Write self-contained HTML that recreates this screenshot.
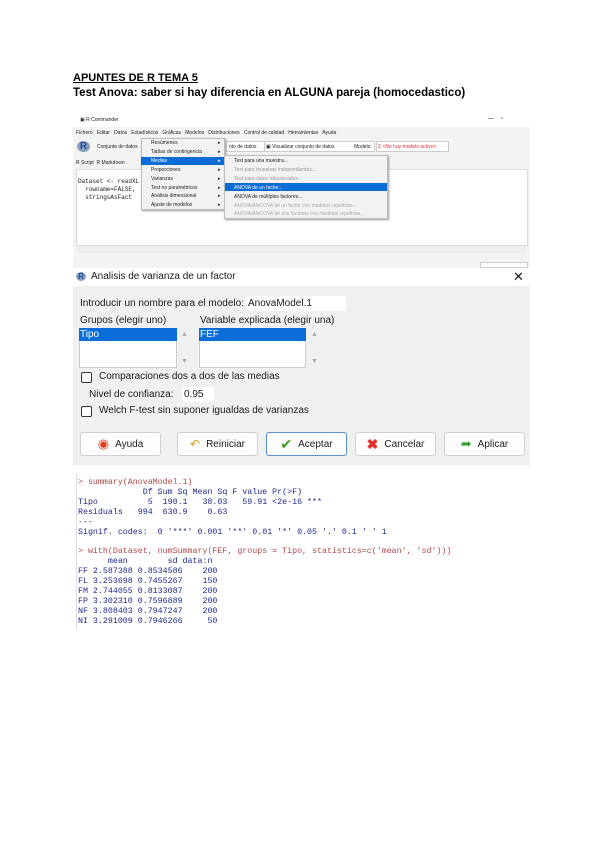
<!DOCTYPE html>
<html><head><meta charset="utf-8"><style>
*{margin:0;padding:0;box-sizing:border-box}
body{width:600px;height:848px;background:#fff;position:relative;font-family:"Liberation Sans",sans-serif;overflow:hidden}
.a{position:absolute}
.s{font-size:5px;color:#222;white-space:nowrap}
.m{font-family:"Liberation Mono",monospace;font-size:8.3px;white-space:pre;line-height:9.9px}
.btn{position:absolute;top:432px;height:24px;width:81px;background:#fdfdfd;border:1px solid #d0d0d0;border-radius:3px;font-size:10px;color:#222;display:flex;align-items:center;justify-content:center;gap:6px}
.lbl{position:absolute;font-size:10px;color:#1a1a1a;white-space:nowrap}
.cb{position:absolute;width:11px;height:11px;border:1px solid #333;border-radius:2px;background:#fff}
</style></head><body>
<div class="a" style="left:73px;top:72px;font-size:11px;font-weight:bold;text-decoration:underline">APUNTES DE R TEMA 5</div>
<div class="a" style="left:73px;top:87px;font-size:11.5px;font-weight:bold">Test Anova: saber si hay diferencia en ALGUNA pareja (homocedastico)</div>

<!-- screenshot 1 -->
<div class="a" style="left:73px;top:115px;width:457px;height:153px;background:#f3f3f3"></div>
<div class="a" style="left:73px;top:115px;width:457px;height:12px;background:#fff"></div>
<div class="a s" style="left:80px;top:117px">▣ R Commander</div>
<div class="a s" style="left:488px;top:116px;font-size:6px">—&nbsp;&nbsp;&nbsp;&nbsp;▫&nbsp;&nbsp;&nbsp;&nbsp;&nbsp;</div>
<div class="a s" style="left:76px;top:130px">Fichero&nbsp;&nbsp; Editar&nbsp;&nbsp; Datos&nbsp;&nbsp; Estadísticos&nbsp;&nbsp; Gráficas&nbsp;&nbsp; Modelos&nbsp;&nbsp; Distribuciones&nbsp;&nbsp; Control de calidad&nbsp;&nbsp; Herramientas&nbsp;&nbsp; Ayuda</div>
<div class="a" style="left:77px;top:141px;width:13px;height:11px;border-radius:50%;background:#8aa0c0;color:#1d4f9a;font-weight:bold;font-size:10px;line-height:11px;text-align:center">R</div>
<div class="a s" style="left:97px;top:144px">Conjunto de datos</div>
<div class="a" style="left:226px;top:141px;width:43px;height:11px;background:#fff;border:1px solid #ccc"></div>
<div class="a s" style="left:229px;top:144px">nto de datos</div>
<div class="a" style="left:264px;top:141px;width:111px;height:11px;background:#fff;border:1px solid #ccc"></div>
<div class="a s" style="left:266px;top:144px">▣ Visualizar conjunto de datos</div>
<div class="a s" style="left:354px;top:144px">Modelo:</div>
<div class="a" style="left:376px;top:141px;width:73px;height:11px;background:#fff;border:1px solid #ccc"></div>
<div class="a s" style="left:378px;top:144px;color:#e03030">Σ &lt;No hay modelo activo&gt;</div>
<div class="a s" style="left:76px;top:160px">R Script&nbsp; R Markdown</div>
<div class="a" style="left:76px;top:169px;width:452px;height:77px;background:#fff;border:1px solid #ddd"></div>
<div class="a m" style="left:78px;top:178px;font-size:6px;line-height:8px;color:#222">Dataset &lt;- readXL
  rowname=FALSE,
  stringsAsFact</div>
<div class="a" style="left:77px;top:246px;width:450px;height:7px;background:#eee"></div>
<div class="a" style="left:480px;top:262px;width:48px;height:6px;background:#fff;border:1px solid #ccc"></div>
<!-- menu -->
<div class="a" style="left:141px;top:138px;width:84px;height:72px;background:#f2f2f2;border:1px solid #bbb;box-shadow:1px 1px 2px #999"></div>
<div class="a" style="left:141px;top:157px;width:84px;height:8px;background:#0a6cd6"></div>
<div class="a s" style="left:151px;top:139px;line-height:8.9px">Resúmenes<br>Tablas de contingencia<br><span style="color:#fff">Medias</span><br>Proporciones<br>Varianzas<br>Test no paramétricos<br>Análisis dimensional<br>Ajuste de modelos</div>
<div class="a s" style="left:218px;top:139px;line-height:8.9px">▸<br>▸<br><span style="color:#fff">▸</span><br>▸<br>▸<br>▸<br>▸<br>▸</div>
<div class="a" style="left:224px;top:155px;width:164px;height:64px;background:#f2f2f2;border:1px solid #bbb;box-shadow:1px 1px 2px #999"></div>
<div class="a" style="left:225px;top:183px;width:162px;height:8px;background:#0a6cd6"></div>
<div class="a s" style="left:234px;top:157px;line-height:8.9px">Test para una muestra...<br><span style="color:#999">Test para muestras independientes...</span><br><span style="color:#999">Test para datos relacionados...</span><br><span style="color:#fff">ANOVA de un factor...</span><br>ANOVA de múltiples factores...<br><span style="color:#aaa">ANOVA/ANCOVA de un factor con medidas repetidas...</span><br><span style="color:#aaa">ANOVA/ANCOVA de dos factores con medidas repetidas...</span></div>

<!-- dialog -->
<div class="a" style="left:73px;top:268px;width:457px;height:197px;background:#f0f0f0"></div>
<div class="a" style="left:73px;top:268px;width:457px;height:18px;background:#fff"></div>
<div class="a" style="left:76px;top:272px;width:10px;height:9px;border-radius:50%;background:#8aa0c0;color:#1d4f9a;font-weight:bold;font-size:8px;line-height:9px;text-align:center">R</div>
<div class="lbl" style="left:91px;top:271px">Analisis de varianza de un factor</div>
<div class="lbl" style="left:513px;top:269px;font-size:13px">✕</div>
<div class="lbl" style="left:80px;top:298px">Introducir un nombre para el modelo:</div>
<div class="a" style="left:246px;top:296px;width:100px;height:15px;background:#fff"></div>
<div class="lbl" style="left:248px;top:298px">AnovaModel.1</div>
<div class="lbl" style="left:80px;top:315px">Grupos (elegir uno)</div>
<div class="lbl" style="left:200px;top:315px">Variable explicada (elegir una)</div>
<div class="a" style="left:79px;top:328px;width:98px;height:40px;background:#fff;border:1px solid #ccc"></div>
<div class="a" style="left:79px;top:328px;width:98px;height:13px;background:#0a6cd6"></div>
<div class="lbl" style="left:80px;top:329px;color:#fff">Tipo</div>
<div class="a" style="left:199px;top:328px;width:107px;height:40px;background:#fff;border:1px solid #ccc"></div>
<div class="a" style="left:199px;top:328px;width:107px;height:13px;background:#0a6cd6"></div>
<div class="lbl" style="left:200px;top:329px;color:#fff">FEF</div>
<div class="lbl" style="left:181px;top:331px;font-size:7px;color:#aaa">▲</div>
<div class="lbl" style="left:181px;top:358px;font-size:7px;color:#aaa">▼</div>
<div class="lbl" style="left:311px;top:331px;font-size:7px;color:#aaa">▲</div>
<div class="lbl" style="left:311px;top:358px;font-size:7px;color:#aaa">▼</div>
<div class="cb" style="left:81px;top:372px"></div>
<div class="lbl" style="left:99px;top:371px">Comparaciones dos a dos de las medias</div>
<div class="lbl" style="left:89px;top:389px">Nivel de confianza:</div>
<div class="a" style="left:182px;top:387px;width:32px;height:15px;background:#fff"></div>
<div class="lbl" style="left:184px;top:389px">0.95</div>
<div class="cb" style="left:81px;top:406px"></div>
<div class="lbl" style="left:99px;top:405px">Welch F-test sin suponer igualdas de varianzas</div>
<div class="btn" style="left:80px"><span style="color:#e04020;font-size:13px">◉</span>Ayuda</div>
<div class="btn" style="left:177px"><span style="color:#d89a20;font-size:12px">↶</span>Reiniciar</div>
<div class="btn" style="left:266px;border-color:#5a8fd6"><span style="color:#3a9a20;font-size:14px">✔</span>Aceptar</div>
<div class="btn" style="left:355px"><span style="color:#e03030;font-size:14px;font-weight:bold">✖</span>Cancelar</div>
<div class="btn" style="left:444px"><span style="color:#30a030;font-size:13px">➦</span>Aplicar</div>

<!-- output -->
<div class="a" style="left:76px;top:474px;width:1px;height:156px;background:#ddd"></div>
<div class="a m" style="left:78px;top:478px;color:#1e2a8a"><span style="color:#b04848">&gt; summary(AnovaModel.1)</span>
             Df Sum Sq Mean Sq F value Pr(&gt;F)
Tipo          5  190.1   38.03   59.91 &lt;2e-16 ***
Residuals   994  630.9    0.63
---
Signif. codes:  0 '***' 0.001 '**' 0.01 '*' 0.05 '.' 0.1 ' ' 1

<span style="color:#b04848">&gt; with(Dataset, numSummary(FEF, groups = Tipo, statistics=c('mean', 'sd')))</span>
      mean        sd data:n
FF 2.587388 0.8534586    200
FL 3.253698 0.7455267    150
FM 2.744055 0.8133087    200
FP 3.302310 0.7596889    200
NF 3.808403 0.7947247    200
NI 3.291009 0.7946266     50</div>
</body></html>
